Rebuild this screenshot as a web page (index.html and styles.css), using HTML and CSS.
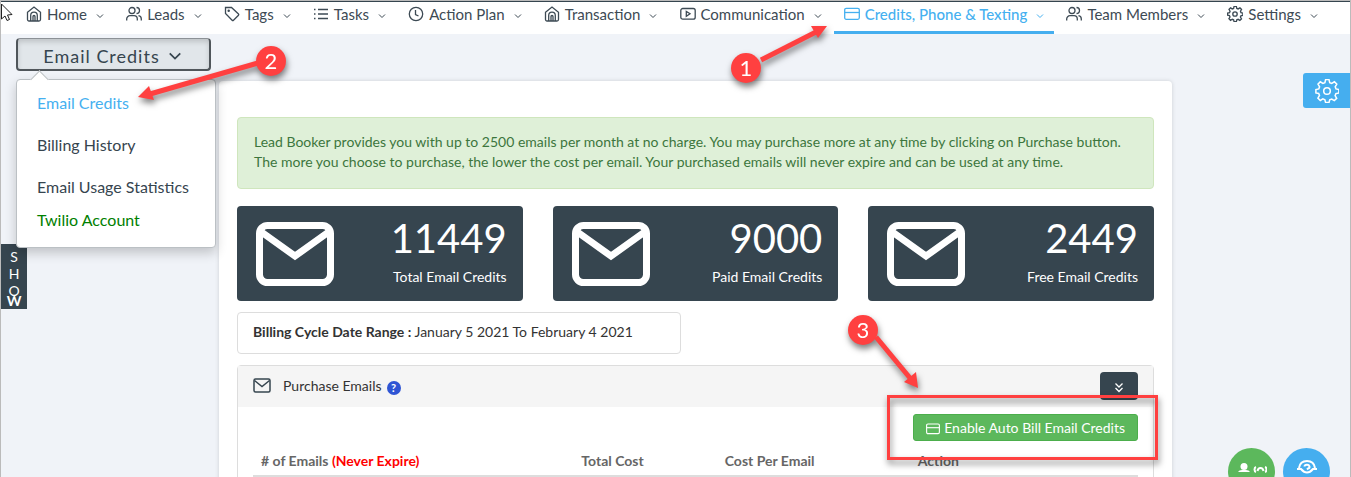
FILE: index.html
```html
<!DOCTYPE html>
<html lang="en">
<head>
    <meta charset="UTF-8">
    <meta name="viewport" content="width=device-width, initial-scale=1.0">
    <title>Email Credits</title>
    <link rel="stylesheet" href="styles.css">
</head>
<body>
    <!-- shared icons -->
    <svg class="sprite" aria-hidden="true">
        <symbol id="home" viewBox="0 0 16 16"><path d="M1.500 6.200 8 1l6.500 5.200V13.500a1.500 1.500 0 0 1-1.500 1.500H3a1.500 1.500 0 0 1-1.500-1.500zM4.700 15V9.500A3.300 3.300 0 0 1 11.300 9.500V15M7 15v-4.500a1 1 0 0 1 2 0V15"/></symbol>
        <symbol id="users" viewBox="0 0 16 16"><circle cx="6" cy="4.500" r="3"/><path d="M.7 14.500v-1.500a3.300 3.300 0 0 1 3.300-3.300h4a3.300 3.300 0 0 1 3.300 3.300v1.500M10.500 1.500a3 3 0 0 1 0 6M12.500 9.700a3.300 3.300 0 0 1 2.800 3.300v1.500"/></symbol>
        <symbol id="tag" viewBox="0 0 16 16"><path d="M1.500 1.500h6l7 6.500a1 1 0 0 1 0 1.300l-5 4.900a1 1 0 0 1-1.400 0l-6.600-6.700z"/><circle cx="4.700" cy="4.700" r=".6"/></symbol>
        <symbol id="list" viewBox="0 0 16 16"><path d="M5 3.500h10M5 8h10M5 12.500h10M1 3.500h1.500M1 8h1.500M1 12.500h1.500"/></symbol>
        <symbol id="clock" viewBox="0 0 16 16"><circle cx="8" cy="8" r="6.700"/><path d="M7.500 4v4.500l3 1.500"/></symbol>
        <symbol id="video" viewBox="0 0 16 16"><rect x=".8" y="2.500" width="14.400" height="10.700" rx="2"/><path d="M6.300 5.500v4.700L10 7.800z"/></symbol>
        <symbol id="card" viewBox="0 0 16 16"><rect x=".7" y="2.300" width="14.600" height="11" rx="1.500"/><path d="M.7 6.500h14.600"/></symbol>
        <symbol id="gear" viewBox="0 0 24 24"><path d="M10.300 2h3.400l.7 3 2 .8 2.700-1.600 2.400 2.400-1.600 2.700.8 2 2.900.7v3.300l-3 .7-.8 2 1.600 2.700-2.400 2.300-2.600-1.600-2 .8-.7 2.800h-3.400l-.7-2.900-2-.8L5 22.900l-2.400-2.400 1.600-2.600-.8-2L.6 15.300V12l2.900-.7.8-2-1.600-2.700L5 4.200l2.600 1.600 2-.8z" transform="translate(.3 -1.400)"/><circle cx="12" cy="12" r="3.300"/></symbol>
        <symbol id="down" viewBox="0 0 8 8"><path d="m1 2.500 3 3 3-3"/></symbol>
        <symbol id="mail" viewBox="0 0 78 64"><rect x="3.500" y="3.500" width="71" height="57" rx="8"/><path d="m4 9 35 25 35-25"/></symbol>
    </svg>

    <div class="page">
        <nav class="topnav">
            <a href="#"><svg class="icon"><use href="#home"/></svg>Home<svg class="caret"><use href="#down"/></svg></a>
            <a href="#"><svg class="icon"><use href="#users"/></svg>Leads<svg class="caret"><use href="#down"/></svg></a>
            <a href="#"><svg class="icon"><use href="#tag"/></svg>Tags<svg class="caret"><use href="#down"/></svg></a>
            <a href="#"><svg class="icon"><use href="#list"/></svg>Tasks<svg class="caret"><use href="#down"/></svg></a>
            <a href="#"><svg class="icon"><use href="#clock"/></svg>Action Plan<svg class="caret"><use href="#down"/></svg></a>
            <a href="#"><svg class="icon"><use href="#home"/></svg>Transaction<svg class="caret"><use href="#down"/></svg></a>
            <a href="#"><svg class="icon"><use href="#video"/></svg>Communication<svg class="caret"><use href="#down"/></svg></a>
            <a href="#" class="active"><svg class="icon"><use href="#card"/></svg>Credits, Phone &amp; Texting<svg class="caret"><use href="#down"/></svg></a>
            <a href="#"><svg class="icon"><use href="#users"/></svg>Team Members<svg class="caret"><use href="#down"/></svg></a>
            <a href="#"><svg class="icon"><use href="#gear"/></svg>Settings<svg class="caret"><use href="#down"/></svg></a>
        </nav>

        <div class="layout">
            <aside class="side">
                <button class="dropdown-button">Email Credits<svg class="arrow"><use href="#down"/></svg></button>
                <div class="dropdown-menu">
                    <a href="#" class="current">Email Credits</a>
                    <a href="#">Billing History</a>
                    <a href="#">Email Usage Statistics</a>
                    <a href="#" class="twilio">Twilio Account</a>
                </div>
            </aside>

            <main class="content">
                <div class="alert">Lead Booker provides you with up to 2500 emails per month at no charge. You may purchase more at any time by clicking on Purchase button. The more you choose to purchase, the lower the cost per email. Your purchased emails will never expire and can be used at any time.</div>

                <div class="stats">
                    <div class="stat">
                        <svg class="stat-icon"><use href="#mail"/></svg>
                        <div class="stat-text"><div class="number">11449</div><div>Total Email Credits</div></div>
                    </div>
                    <div class="stat">
                        <svg class="stat-icon"><use href="#mail"/></svg>
                        <div class="stat-text"><div class="number">9000</div><div>Paid Email Credits</div></div>
                    </div>
                    <div class="stat">
                        <svg class="stat-icon"><use href="#mail"/></svg>
                        <div class="stat-text"><div class="number">2449</div><div>Free Email Credits</div></div>
                    </div>
                </div>

                <div class="cycle"><b>Billing Cycle Date Range :</b> January 5 2021 To February 4 2021</div>

                <section class="panel">
                    <header class="panel-head">
                        <svg class="head-icon" viewBox="0 0 18 16"><rect x="1" y="1" width="16" height="13" rx="1.500"/><path d="m1.500 2.500 7.500 6 7.500-6"/></svg>
                        <span>Purchase Emails</span>
                        <span class="help">?</span>
                        <button class="collapse" aria-label="Collapse"><svg viewBox="0 0 10 12"><path d="m1.500 1.500 3.500 3.500 3.500-3.500M1.500 6l3.500 3.500L8.500 6"/></svg></button>
                    </header>
                    <div class="panel-body">
                        <button class="enable"><svg class="icon"><use href="#card"/></svg>Enable Auto Bill Email Credits</button>
                        <table>
                            <thead>
                                <tr>
                                    <th class="emails"># of Emails <span>(Never Expire)</span></th>
                                    <th class="total">Total Cost</th>
                                    <th class="per">Cost Per Email</th>
                                    <th>Action</th>
                                </tr>
                            </thead>
                        </table>
                    </div>
                </section>
            </main>
        </div>

        <div class="show-tab"><span>S</span><span>H</span><span>O</span><b>W</b></div>
        <button class="settings-tab" aria-label="Settings"><svg><use href="#gear"/></svg></button>
        <button class="bubble people" aria-label="People"><svg viewBox="0 0 30 12"><ellipse cx="7" cy="3.500" rx="3.500" ry="3.500"/><path d="M1 9q1-2 4-2h4q3 0 4 2z"/><path class="line" d="M19 4q-1.500.5-1.500 2.500t1.500 2.500M28 4q1.500.5 1.500 2.500T28 9M20.500 8q.5-3 3-3t3 3"/></svg></button>
        <button class="bubble help-chat" aria-label="Help"><svg viewBox="0 0 20 18"><path d="M2 9q1-7 8-7t8 7M0 10h4q6 7 12 0h4"/><path d="M7.500 7.500a2.500 2 0 1 1 3.500 2l-1 1"/></svg></button>

        <!-- numbered steps -->
        <svg class="steps" width="1351" height="477">
            <g class="step">
                <path class="shaft" d="M761 60 816 32"/>
                <path d="m827 26-16 0 7 12z"/>
                <circle cx="746" cy="68" r="15"/>
                <text x="746" y="76">1</text>
            </g>
            <g class="step">
                <path class="shaft" d="M258 63 150 94"/>
                <path d="m138 97 11-11 5 14z"/>
                <circle cx="271" cy="61" r="15"/>
                <text x="271" y="69">2</text>
            </g>
            <g class="step">
                <path class="shaft" d="m876 337 34 41"/>
                <path d="m918 388-2-16-12 10z"/>
                <circle cx="863" cy="330" r="15"/>
                <text x="863" y="338">3</text>
            </g>
            <g class="step"><rect x="888.500" y="396.500" width="268" height="62"/></g>
            <path class="pointer" d="M1.500 4v15l3.500-3 2 4.500 2.500-1-2-4.500 4.500-.5z"/>
        </svg>
    </div>
</body>
</html>
```
FILE: styles.css
```css
* {
    box-sizing: border-box;
}

body {
    margin: 0;
    font-family: Lato, "Open Sans", sans-serif;
    font-size: 14px;
    line-height: 20px;
    color: #333;
    background: #f0f3f8;
}

a {
    color: inherit;
    text-decoration: none;
}

button {
    font-family: inherit;
    cursor: pointer;
}

svg {
    fill: none;
    stroke: currentColor;
}

.sprite {
    display: none;
}

.page {
    position: relative;
    height: 100vh;
    overflow: hidden;
    border: 1px solid #bbb;
    border-bottom: 0;
}

/* top navigation */
.topnav {
    display: flex;
    justify-content: space-between;
    height: 33px;
    padding: 0 22px 0 15px;
    background: #fff;
    border-top: 1px solid #36454f;
    font-size: 15px;
    color: #3d4a54;
}

.topnav a {
    display: flex;
    align-items: center;
    padding: 0 10px 8px;
    white-space: nowrap;
}

.icon {
    width: 16px;
    height: 16px;
    margin-right: 5px;
    stroke-width: 1.3;
}

.topnav a:last-child .icon {
    stroke-width: 2;
}

.caret {
    width: 8px;
    height: 8px;
    margin-left: 9px;
    margin-top: 3px;
}

.topnav .active {
    color: #45b0f0;
    font-weight: 500;
    border-bottom: 3px solid #45aeef;
    padding-bottom: 5px;
}

.layout {
    display: flex;
    padding: 0 178px 0 15px;
}

/* left drop-down */
.side {
    position: relative;
    flex: 0 0 203px;
    padding-top: 4px;
}

.dropdown-button {
    display: flex;
    align-items: center;
    justify-content: center;
    width: 195px;
    height: 33px;
    padding: 3px 8px 0 6px;
    font-size: 18px;
    letter-spacing: 1px;
    color: #36454f;
    background: #e1e6ea;
    border: 2px solid #50565b;
    border-top: 1px solid #8c9196;
    border-radius: 4px;
    box-shadow: inset 0 3px 5px rgba(0, 0, 0, 0.15);
}

.arrow {
    width: 14px;
    height: 14px;
    margin-left: 8px;
    stroke-width: 1;
}

.dropdown-menu {
    position: absolute;
    z-index: 2;
    top: 45px;
    left: 0;
    width: 200px;
    height: 169px;
    padding: 2px 20px;
    font-size: 16px;
    color: #36454f;
    background: #fff;
    border: 1px solid #bbc0c4;
    border-radius: 4px;
    box-shadow: 0 5px 12px rgba(0, 0, 0, 0.2);
}

.dropdown-menu::before {
    content: "";
    position: absolute;
    top: -7px;
    left: 16px;
    width: 12px;
    height: 12px;
    background: #fff;
    border: 1px solid #bbc0c4;
    border-width: 1px 0 0 1px;
    transform: rotate(45deg);
}

.dropdown-menu a {
    display: block;
    line-height: 42px;
    white-space: nowrap;
}

.dropdown-menu .current {
    color: #45b0f0;
}

.dropdown-menu .twilio {
    line-height: 24px;
    color: green;
}

/* main content */
.content {
    flex: 1;
    min-height: 480px;
    margin-top: 47px;
    padding: 36px 18px;
    background: #fff;
    border-radius: 4px;
    box-shadow: 0 0 4px rgba(0, 0, 0, 0.15);
}

.alert {
    padding: 14px 16px 16px;
    color: #3c763d;
    background: #dff0d8;
    border: 1px solid #cfe6bd;
    border-radius: 4px;
}

.stats {
    display: grid;
    grid-template-columns: repeat(3, 1fr);
    gap: 30px;
    margin: 17px 0 11px;
}

.stat {
    display: flex;
    justify-content: space-between;
    align-items: center;
    height: 95px;
    padding: 0 16px 0 19px;
    color: #fff;
    background: #36454f;
    border-radius: 4px;
}

.stat-icon {
    width: 78px;
    height: 64px;
    stroke-width: 7;
}

.stat-text {
    padding-bottom: 6px;
    text-align: right;
}

.number {
    font-size: 40px;
    line-height: 46px;
    padding-bottom: 6px;
}

.cycle {
    width: 444px;
    padding: 9px 15px 11px;
    border: 1px solid #ddd;
    border-radius: 4px;
}

.panel {
    margin-top: 11px;
    border: 1px solid #ddd;
    border-radius: 4px;
}

.panel-head {
    display: flex;
    align-items: center;
    height: 41px;
    padding: 0 15px 1px;
    background: #f5f5f5;
}

.head-icon {
    width: 18px;
    height: 16px;
    margin-right: 12px;
    color: #36454f;
    stroke-width: 1.5;
}

.help {
    width: 14px;
    height: 14px;
    margin: 3px 0 0 5px;
    font-size: 11px;
    font-weight: bold;
    line-height: 14px;
    text-align: center;
    color: #fff;
    background: #2f55d4;
    border-radius: 50%;
}

.collapse {
    width: 38px;
    height: 28px;
    margin-left: auto;
    padding: 0;
    color: #fff;
    background: #36454f;
    border: 0;
    border-radius: 4px;
}

.collapse svg {
    width: 10px;
    height: 12px;
    vertical-align: middle;
    stroke-width: 1.3;
}

.panel-body {
    display: flex;
    flex-direction: column;
    padding: 7px 15px;
}

.enable {
    display: flex;
    align-items: center;
    align-self: flex-end;
    height: 27px;
    padding: 0 12px;
    font-size: 14px;
    color: #fff;
    background: #5cb85c;
    border: 1px solid #4cae4c;
    border-radius: 3px;
}

.enable .icon {
    width: 14px;
    height: 14px;
    margin-top: 3px;
    margin-right: 4px;
}

table {
    width: 100%;
    margin-top: 6px;
    border-collapse: collapse;
}

th {
    padding: 4px 8px;
    text-align: left;
    color: #666;
    border-bottom: 2px solid #ddd;
}

th span {
    color: red;
}

.emails {
    width: 36.2%;
}

.total {
    width: 16.2%;
}

.per {
    width: 21.8%;
}

/* tabs and bubbles that float at the window edges */
.show-tab {
    position: absolute;
    top: 243px;
    left: 0;
    display: flex;
    flex-direction: column;
    align-items: center;
    width: 26px;
    height: 65px;
    padding-top: 4px;
    line-height: 17px;
    color: #fff;
    background: #36454f;
}

.show-tab b {
    line-height: 4px;
}

.settings-tab {
    position: absolute;
    top: 72px;
    right: 0;
    width: 47px;
    height: 35px;
    padding: 0;
    color: #fff;
    background: #45aeef;
    border: 0;
    border-radius: 3px 0 0 3px;
}

.settings-tab svg {
    width: 24px;
    height: 24px;
    vertical-align: middle;
    stroke-width: 1.5;
}

.bubble {
    position: absolute;
    top: 447px;
    width: 47px;
    height: 47px;
    padding: 0 0 4px;
    color: #fff;
    border: 0;
    border-radius: 50%;
}

.people {
    right: 75px;
    background: #5cb85c;
}

.people svg {
    width: 30px;
    height: 12px;
    fill: #fff;
    stroke: none;
}

.people .line {
    fill: none;
    stroke: #fff;
    stroke-width: 2;
}

.help-chat {
    right: 20px;
    background: #45aeef;
}

.help-chat svg {
    width: 20px;
    height: 18px;
    stroke-width: 2;
}

/* numbered steps */
.steps {
    position: absolute;
    z-index: 3;
    top: -1px;
    left: -1px;
    pointer-events: none;
}

.step {
    fill: #ff4040;
    stroke: none;
    filter: drop-shadow(1px 4px 3px rgba(0, 0, 0, 0.5));
}

.step .shaft {
    stroke: #ff4040;
    stroke-width: 5;
}

.step rect {
    fill: none;
    stroke: #ff4040;
    stroke-width: 3;
}

.step text {
    font-size: 22px;
    fill: #fff;
    text-anchor: middle;
}

.pointer {
    fill: #fff;
    stroke: #222;
}
```
